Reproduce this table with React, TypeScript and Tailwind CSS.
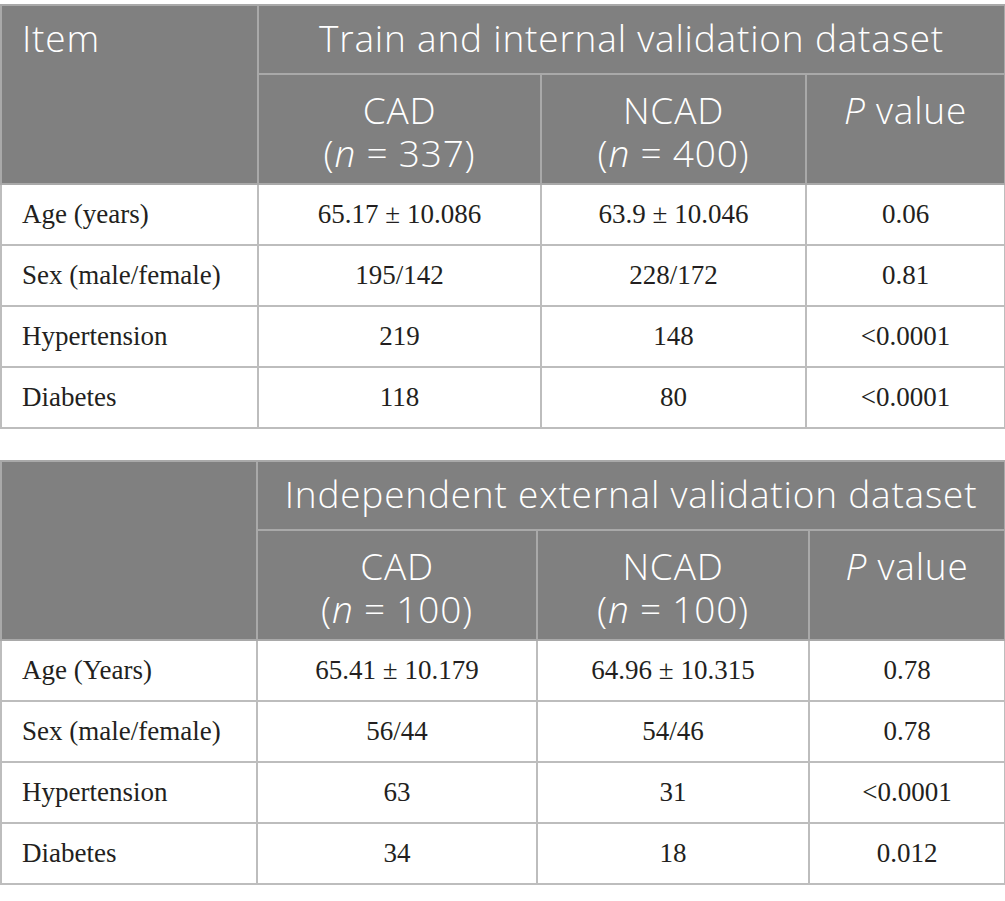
const first = {
  group: 'Train and internal validation dataset',
  corner: 'Item',
  cad: '337',
  ncad: '400',
  widths: ['w-[257px]', 'w-[283px]', 'w-[265px]', 'w-[199px]'],
  rows: [
    ['Age (years)', '65.17 ± 10.086', '63.9 ± 10.046', '0.06'],
    ['Sex (male/female)', '195/142', '228/172', '0.81'],
    ['Hypertension', '219', '148', '<0.0001'],
    ['Diabetes', '118', '80', '<0.0001'],
  ],
};

const second = {
  group: 'Independent external validation dataset',
  corner: '',
  cad: '100',
  ncad: '100',
  widths: ['w-[256px]', 'w-[280px]', 'w-[272px]', 'w-[196px]'],
  rows: [
    ['Age (Years)', '65.41 ± 10.179', '64.96 ± 10.315', '0.78'],
    ['Sex (male/female)', '56/44', '54/46', '0.78'],
    ['Hypertension', '63', '31', '<0.0001'],
    ['Diabetes', '34', '18', '0.012'],
  ],
};

type Data = typeof first;

function DataTable({ d }: { d: Data }) {
  const head = 'border-2 border-[#a9a9a9] align-top font-light text-white';
  return (
    <table className="w-[1005px] table-fixed border-collapse border-2 border-[#bdbdbd] [font-family:'Open_Sans',sans-serif]">
      <colgroup>
        {d.widths.map((w, i) => (
          <col key={i} className={w} />
        ))}
      </colgroup>
      <thead className="bg-[#808080] text-[37px] leading-[43px] tracking-[0.8px]">
        <tr>
          <th rowSpan={2} className={`${head} pt-[10px] pl-[20px] text-left`}>
            {d.corner}
          </th>
          <th colSpan={3} className={`${head} h-[69px] pt-[10px] text-center`}>
            {d.group}
          </th>
        </tr>
        <tr>
          <th className={`${head} h-[110px] pt-[13px] text-center`}>
            CAD
            <br />(<i>n</i> = {d.cad})
          </th>
          <th className={`${head} pt-[13px] text-center`}>
            NCAD
            <br />(<i>n</i> = {d.ncad})
          </th>
          <th className={`${head} pt-[13px] text-center`}>
            <i>P</i> value
          </th>
        </tr>
      </thead>
      <tbody className="text-[27px] text-[#231f20] [font-family:'Liberation_Serif',serif]">
        {d.rows.map((r, i) => (
          <tr key={i} className="h-[61px]">
            {r.map((c, j) => (
              <td
                key={j}
                className={`border-2 border-[#bdbdbd] align-middle ${j === 0 ? 'pl-[20px] text-left' : 'text-center'}`}
              >
                {c}
              </td>
            ))}
          </tr>
        ))}
      </tbody>
    </table>
  );
}

export default function App() {
  return (
    <div className="w-[1005px] h-[901px] bg-white pt-[4px] flex flex-col gap-[31px]">
      <DataTable d={first} />
      <DataTable d={second} />
    </div>
  );
}
